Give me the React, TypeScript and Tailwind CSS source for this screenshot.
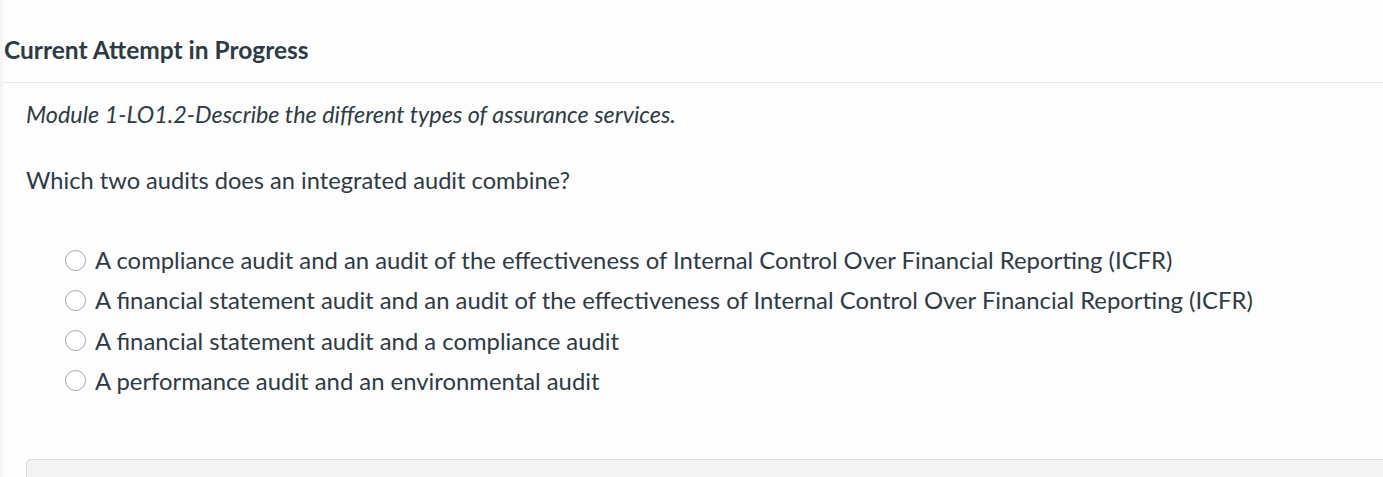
import React from 'react';

const options = [
  'A compliance audit and an audit of the effectiveness of Internal Control Over Financial Reporting (ICFR)',
  'A financial statement audit and an audit of the effectiveness of Internal Control Over Financial Reporting (ICFR)',
  'A financial statement audit and a compliance audit',
  'A performance audit and an environmental audit',
];

export default function App() {
  return (
    <div className="flex min-h-[477px] w-full overflow-hidden bg-[#fdfdfd] text-[#2d3b45] font-['Lato','Liberation_Sans',sans-serif]">
      <div className="w-[3px] shrink-0 bg-[#f5f5f5]" />
      <div className="flex-1">
        <h2 className="pt-[34px] pb-[16px] pl-[1px] text-[24.5px] leading-[32px] font-bold border-b border-[#e8e8e8]">
          Current Attempt in Progress
        </h2>
        <div className="pl-[23px]">
          <p className="mt-[15px] text-[23.4px] leading-[32px] italic">
            Module 1-LO1.2-Describe the different types of assurance services.
          </p>
          <p className="mt-[34px] text-[23.65px] leading-[32px]">
            Which two audits does an integrated audit combine?
          </p>
          <div className="mt-[48px] pl-[39px] flex flex-col gap-[8.3px]">
            {options.map((o) => (
              <label key={o} className="flex items-center gap-[9px] text-[23.85px] leading-[32px]">
                <span className="w-[21px] h-[21px] rounded-full border-[1.5px] border-[#a0a0a8] bg-white shrink-0" />
                <span>{o}</span>
              </label>
            ))}
          </div>
          <div className="mt-[62.5px] h-[40px] rounded-tl-[5px] border-t border-l border-[#dcdcdc] bg-[#f3f3f3]" />
        </div>
      </div>
    </div>
  );
}
